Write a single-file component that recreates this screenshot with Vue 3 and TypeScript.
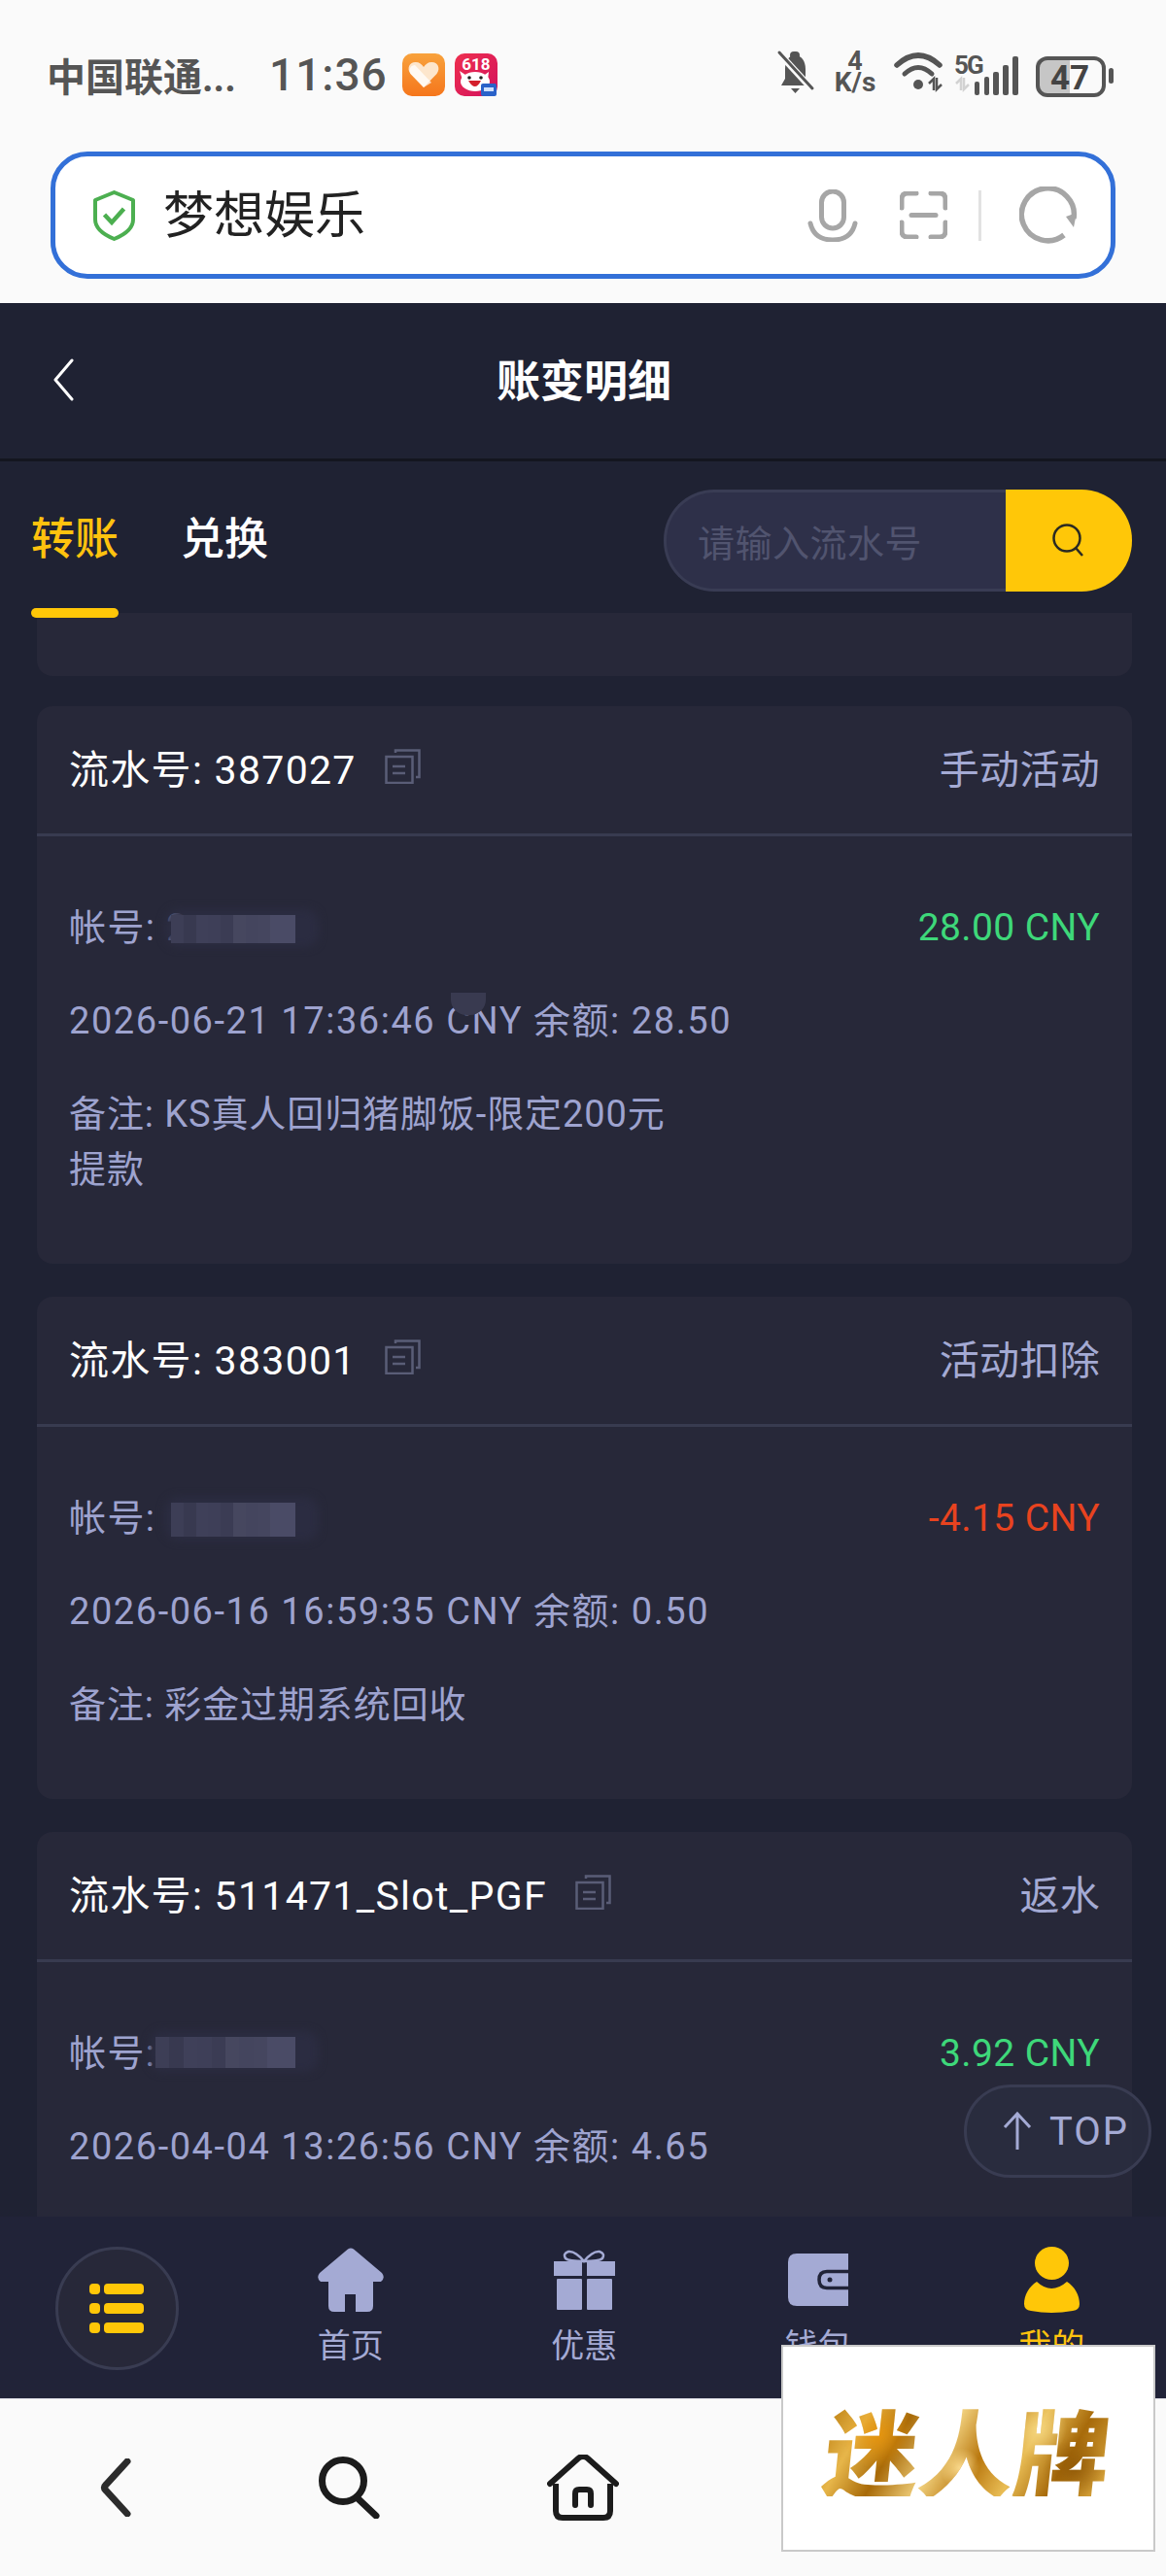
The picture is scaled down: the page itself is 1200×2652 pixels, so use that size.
<script setup lang="ts">
interface Card {
  id: string
  kind: string
  account: string
  amount: string
  tone: string
  time: string
  note: string[]
  mosaic: { left: number; top: number; width: number; height: number }
}
const cards: Card[] = [
  { id: '387027', kind: '手动活动', account: '帐号: 2', amount: '28.00 CNY', tone: 'green', time: '2026-06-21 17:36:46 CNY 余额: 28.50', note: ['备注: KS真人回归猪脚饭-限定200元', '提款'], mosaic: { left: 105, top: 15, width: 128, height: 29 } },
  { id: '383001', kind: '活动扣除', account: '帐号:', amount: '-4.15 CNY', tone: 'red', time: '2026-06-16 16:59:35 CNY 余额: 0.50', note: ['备注: 彩金过期系统回收'], mosaic: { left: 105, top: 12, width: 128, height: 35 } },
  { id: '511471_Slot_PGF', kind: '返水', account: '帐号:', amount: '3.92 CNY', tone: 'green', time: '2026-04-04 13:26:56 CNY 余额: 4.65', note: [], mosaic: { left: 89, top: 11, width: 144, height: 32 } }
]
const shades = ['#3d3e56', '#45465f', '#3b3c54', '#383950', '#4a4b66', '#46475f', '#3f4059', '#4a4b66', '#44455e', '#3e3f58']
const mosaicCells = Array.from({ length: 20 }, (_, i) => shades[(i * 3) % shades.length])
const navItems = [
  { label: '首页', active: false, icon: 'home' },
  { label: '优惠', active: false, icon: 'gift' },
  { label: '钱包', active: false, icon: 'wallet' },
  { label: '我的', active: true, icon: 'user' }
]
</script>

<template>
  <div class="phone">
    <header class="status">
      <div class="status-left">
        <span class="carrier">中国联通...</span>
        <span class="clock">11:36</span>
        <svg class="app-icon" width="44" height="44" viewBox="0 0 44 44">
          <defs>
            <linearGradient id="hg" x1="0" y1="0" x2="0" y2="1">
              <stop offset="0" stop-color="#f8a23c" />
              <stop offset="1" stop-color="#f5761c" />
            </linearGradient>
          </defs>
          <rect width="44" height="44" rx="10" fill="url(#hg)" />
          <path d="M22 35 L8.500 21 C4 15 8 8.500 14 9 C17.500 9 20 11 22 14 C24 11 26.500 9 30 9 C36 8.500 40 15 35.500 21 Z" fill="#fde6cc" />
          <path d="M13 12 L30 30 L22 35 L8.500 21 C6 16 9 12 13 12 Z" fill="#fff" opacity=".75" />
        </svg>
        <svg class="app-icon" width="44" height="44" viewBox="0 0 44 44">
          <defs>
            <linearGradient id="pg" x1="0" y1="0" x2="1" y2="1">
              <stop offset="0" stop-color="#ee2f4e" />
              <stop offset="1" stop-color="#d3125e" />
            </linearGradient>
          </defs>
          <rect width="44" height="44" rx="10" fill="url(#pg)" />
          <text x="22" y="17" text-anchor="middle" class="t618">618</text>
          <ellipse cx="21" cy="29" rx="15" ry="10" fill="#fff" />
          <path d="M5 18 L14 24 L8 27 Z M35 19 L28 24 L34 27 Z" fill="#fff" />
          <path d="M14 28 Q21 40 27 28 Z" fill="#d4202c" />
          <circle cx="15" cy="25" r="1.800" fill="#222" />
          <circle cx="27" cy="25" r="1.800" fill="#222" />
          <rect x="27" y="31" width="16" height="13" rx="2" fill="#2a62c9" />
          <rect x="30" y="35" width="10" height="4" fill="#cfe0ff" />
        </svg>
      </div>
      <svg class="status-right" width="350" height="70" viewBox="0 -10 350 70">
        <path d="M20 6 C27 6 31 12 31 20 V30 L36 37 H6 L10 30 V20 C10 12 14 6 20 6 Z" fill="#555" />
        <rect x="15" y="2" width="10" height="8" rx="4" fill="#555" />
        <path d="M16 40 H25 L20.500 45 Z" fill="#555" />
        <path d="M3 3 L38 41" stroke="#fafafa" stroke-width="7" />
        <path d="M4 3 L38 40" stroke="#555" stroke-width="3" stroke-linecap="round" />
        <text class="t-speed"><tspan x="82" y="21" text-anchor="middle" class="t-speed1">4</tspan><tspan x="82" y="43" text-anchor="middle">K/s</tspan></text>
        <path d="M125 16 Q147 -4 169 16" fill="none" stroke="#555" stroke-width="5.500" stroke-linecap="round" />
        <path d="M133 25 Q147 12 161 25" fill="none" stroke="#555" stroke-width="5" stroke-linecap="round" />
        <circle cx="147" cy="36" r="5" fill="#555" />
        <path d="M158 35 L163 30 V42 M166 29 V41 L171 36" fill="none" stroke="#555" stroke-width="2.500" />
        <text x="184" y="25" class="t-5g">5G</text>
        <path d="M186 35 L191 30 V42 M194 29 V41 L199 36" fill="none" stroke="#d2d2d2" stroke-width="2.500" />
        <rect x="205" y="33" width="5" height="14" rx="2" fill="#555" />
        <rect x="215" y="28" width="5" height="19" rx="2" fill="#555" />
        <rect x="224" y="23" width="6" height="24" rx="2" fill="#555" />
        <rect x="234" y="16" width="6" height="31" rx="2" fill="#555" />
        <rect x="244" y="7" width="6" height="40" rx="2" fill="#555" />
        <path d="M268 17 Q268 9 276 9 H303 V45 H276 Q268 45 268 37 Z" fill="#c6c6c6" />
        <rect x="270" y="9" width="68" height="38" rx="10" fill="none" stroke="#555" stroke-width="4" />
        <text x="303" y="41" text-anchor="middle" class="t-batt">47</text>
        <rect x="343" y="19" width="5" height="16" rx="2.500" fill="#555" />
      </svg>
    </header>

    <section class="url-wrap">
      <div class="url-box">
        <svg width="43" height="52" viewBox="0 0 43 52" class="shield">
          <path d="M21.500 2 L41 10 V30 Q41 42 21.500 50 Q2 42 2 30 V10 Z" fill="none" stroke="#4caf50" stroke-width="4" stroke-linejoin="round" />
          <path d="M11.500 25 L19 33 L31.500 19" fill="none" stroke="#4caf50" stroke-width="4.500" />
        </svg>
        <span class="url-text">梦想娱乐</span>
        <div class="url-tools">
          <svg width="52" height="54" viewBox="0 0 52 54">
            <rect x="14.500" y="2" width="23" height="38" rx="11.500" fill="none" stroke="#a6a6a6" stroke-width="5" />
            <path d="M3 35 Q7 52 26 52 Q45 52 49 35" fill="none" stroke="#a6a6a6" stroke-width="5" stroke-linecap="round" />
          </svg>
          <svg class="scan" width="49" height="49" viewBox="0 0 49 49">
            <path d="M2 17 V8 Q2 2 8 2 H17 M32 2 H41 Q47 2 47 8 V17 M2 32 V41 Q2 47 8 47 H17 M47 32 V41 Q47 47 41 47 H32" fill="none" stroke="#a6a6a6" stroke-width="5" stroke-linecap="round" />
            <path d="M12 24.500 H37" stroke="#a6a6a6" stroke-width="5" stroke-linecap="round" />
          </svg>
          <span class="url-sep"></span>
          <svg width="60" height="60" viewBox="0 0 60 60">
            <path d="M46 50 A27 27 0 1 1 56 33" fill="none" stroke="#a6a6a6" stroke-width="5.500" />
            <path d="M48 31 L59 27 L56 42 Z" fill="#a6a6a6" />
          </svg>
        </div>
      </div>
    </section>

    <main class="page">
      <div class="topbar">
        <svg class="back" width="22" height="44" viewBox="0 0 22 44">
          <path d="M20 2 L3 22 L20 42" fill="none" stroke="#fff" stroke-width="3" stroke-linecap="round" stroke-linejoin="round" />
        </svg>
        <h1 class="title">账变明细</h1>
      </div>

      <div class="tabs">
        <div class="tab active">转账<i class="tab-line"></i></div>
        <div class="tab">兑换</div>
        <div class="search">
          <span class="search-field">请输入流水号</span>
          <span class="search-btn">
            <svg width="34" height="36" viewBox="0 0 34 36">
              <circle cx="16" cy="16" r="13.500" fill="none" stroke="#2b2a22" stroke-width="2.500" />
              <path d="M25 26 L32 34" stroke="#2b2a22" stroke-width="2.500" />
            </svg>
          </span>
        </div>
      </div>

      <div class="list">
        <div class="stub"></div>
        <article v-for="card in cards" :key="card.id" class="card">
          <div class="card-head">
            <span class="serial">流水号: {{ card.id }}</span>
            <svg class="copy" width="37" height="36" viewBox="0 0 37 36">
              <path d="M11 4 V1.500 H35.500 V29 H32" fill="none" stroke="#5a5d77" stroke-width="2.500" />
              <rect x="1.500" y="8" width="27" height="27" fill="none" stroke="#5a5d77" stroke-width="2.500" />
              <path d="M8 18 H21 M8 25 H21" stroke="#5a5d77" stroke-width="2.500" />
            </svg>
            <span class="kind">{{ card.kind }}</span>
          </div>
          <div class="card-body">
            <div class="row">
              <span>{{ card.account }}</span>
              <span class="amount" :class="card.tone">{{ card.amount }}</span>
              <span class="smudge" :style="{ left: card.mosaic.left - 6 + 'px', width: card.mosaic.width + 30 + 'px', top: card.mosaic.top - 6 + 'px', height: card.mosaic.height + 10 + 'px' }"></span>
              <span class="mosaic" :style="{ left: card.mosaic.left + 'px', width: card.mosaic.width + 'px', top: card.mosaic.top + 'px', height: card.mosaic.height + 'px' }">
                <i v-for="(c, i) in mosaicCells" :key="i" :style="{ background: c }"></i>
              </span>
            </div>
            <div class="row time">
              <span>{{ card.time }}</span>
              <span v-if="card.id === '387027'" class="spot"></span>
            </div>
            <div v-if="card.note.length" class="note">
              <div v-for="line in card.note" :key="line" class="note-line">{{ line }}</div>
            </div>
          </div>
        </article>
      </div>

      <nav class="nav">
        <div class="nav-cell">
          <span class="menu">
            <svg width="56" height="51" viewBox="0 0 56 51">
              <g fill="#ffc708">
                <rect width="11" height="11" rx="4" />
                <rect x="15" width="41" height="11" rx="4" />
                <rect y="20" width="11" height="11" rx="4" />
                <rect x="15" y="20" width="41" height="11" rx="4" />
                <rect y="40" width="11" height="11" rx="4" />
                <rect x="15" y="40" width="41" height="11" rx="4" />
              </g>
            </svg>
          </span>
        </div>
        <div v-for="item in navItems" :key="item.label" class="nav-cell" :class="{ on: item.active }">
          <span class="nav-icon">
            <svg v-if="item.icon === 'home'" class="i-home" width="68" height="66" viewBox="0 0 68 66">
              <path d="M31 1.500 Q34 -0.500 37 1.500 L66 26 Q70 31 65 35 H57 V60 Q57 66 51 66 H39 V48 H28 V66 H17 Q11 66 11 60 V35 H3 Q-2 31 2 26 Z" fill="#a4aad4" />
            </svg>
            <svg v-else-if="item.icon === 'gift'" class="i-gift" width="63" height="62" viewBox="0 0 63 62">
              <path d="M31 12 Q22 1 15 2 Q9 4 12 9 Q15 12 31 12 Q47 12 50 9 Q53 4 47 2 Q40 1 31 12 Z" fill="none" stroke="#a4aad4" stroke-width="2.500" />
              <rect y="12" width="29" height="15" fill="#a4aad4" />
              <rect x="34" y="12" width="29" height="15" fill="#a4aad4" />
              <rect x="3" y="30" width="26" height="32" rx="1" fill="#a4aad4" />
              <rect x="34" y="30" width="26" height="32" rx="1" fill="#a4aad4" />
            </svg>
            <svg v-else-if="item.icon === 'wallet'" class="i-wallet" width="62" height="54" viewBox="0 0 62 54">
              <path d="M9 0 H62 V54 H9 Q0 54 0 45 V9 Q0 0 9 0 Z" fill="#a4aad4" />
              <path d="M62 18.500 H40 Q32 18.500 32 27 Q32 35.500 40 35.500 H62" fill="none" stroke="#212338" stroke-width="3.500" />
              <circle cx="43" cy="27" r="2.500" fill="#212338" />
            </svg>
            <svg v-else width="57" height="68" viewBox="0 0 57 68">
              <ellipse cx="28.500" cy="17" rx="17.500" ry="17" fill="#ffc708" />
              <path d="M13 36 Q28 50 44 36 C52 41 57 50 57 59 Q57 65 50 66 Q28 70 7 66 Q0 65 0 59 C0 50 5 41 13 36 Z" fill="#ffc708" />
            </svg>
          </span>
          <span class="nav-label">{{ item.label }}</span>
        </div>
      </nav>
    </main>

    <footer class="browser">
      <svg width="32" height="60" viewBox="0 0 32 60">
        <path d="M28 3 L6 27 Q3 30 6 33 L28 57" fill="none" stroke="#2c2c2c" stroke-width="7" stroke-linecap="round" />
      </svg>
      <svg class="b-search" width="64" height="64" viewBox="0 0 64 64">
        <circle cx="25" cy="25" r="21.500" fill="none" stroke="#1c1c1c" stroke-width="7" />
        <path d="M39 42 L59 61" stroke="#1c1c1c" stroke-width="7" stroke-linecap="round" />
      </svg>
      <svg class="b-home" width="74" height="68" viewBox="0 0 74 68">
        <path d="M3 30 L32 4 Q37 0 42 4 L71 30" fill="none" stroke="#1c1c1c" stroke-width="6" stroke-linecap="round" />
        <path d="M9 30 V58 Q9 65 16 65 H58 Q65 65 65 58 V30" fill="none" stroke="#1c1c1c" stroke-width="6" />
        <path d="M29 52 V40 Q29 36 33 36 H41 Q45 36 45 40 V52" fill="none" stroke="#1c1c1c" stroke-width="6" stroke-linecap="round" />
      </svg>
    </footer>

    <div class="to-top">
      <svg width="30" height="40" viewBox="0 0 30 40">
        <path d="M15 39 V2 M2 16 L15 2 L28 16" fill="none" stroke="#a4aad4" stroke-width="3" />
      </svg>
      <span>TOP</span>
    </div>

    <div class="logo"><span class="logo-text">迷人牌</span></div>
  </div>
</template>

<style>
html, body { margin: 0; background: #fafafa; }
</style>

<style scoped>
.phone {
  position: relative;
  width: 1200px;
  height: 2652px;
  overflow: hidden;
  display: flex;
  flex-direction: column;
  background: #fafafa;
  font-family: Roboto, "Noto Sans CJK SC", sans-serif;
}
.status {
  height: 156px;
  flex: none;
  display: flex;
  align-items: center;
  justify-content: space-between;
  box-sizing: border-box;
  padding: 0 52px 0 48px;
}
.status-left { display: flex; align-items: center; margin-top: -2px; }
.carrier { font-size: 40px; font-weight: 700; color: #555; width: 229px; white-space: nowrap; }
.clock { font-size: 46px; font-weight: 500; color: #555; width: 137px; letter-spacing: 1px; }
.app-icon { margin-right: 10px; }
.status-right { margin-top: -4px; }
.t618 { font: 700 17px Roboto, sans-serif; fill: #fff; }
.t-speed { font: 700 28px Roboto, sans-serif; fill: #555; }
.t-speed1 { font-size: 27px; }
.t-5g { font: 700 26px Roboto, sans-serif; fill: #555; letter-spacing: -2px; }
.t-batt { font: 700 35px Roboto, sans-serif; fill: #444; }

.url-wrap { height: 156px; flex: none; box-sizing: border-box; padding: 0 52px 25px 52px; }
.url-box {
  height: 131px;
  box-sizing: border-box;
  border: 5px solid #3370d8;
  border-radius: 38px;
  background: #fff;
  display: flex;
  align-items: center;
  padding-left: 39px;
}
.url-text { margin: 2px 0 0 29px; font-size: 52px; color: #222; line-height: 1; }
.url-tools { margin-left: auto; margin-right: 34px; display: flex; align-items: center; }
.scan { margin-left: 43px; }
.url-sep { width: 3px; height: 52px; background: #e2e2e2; margin: 0 39px 0 32px; }

.page { flex: 1; min-height: 0; display: flex; flex-direction: column; background: #1f2233; }
.topbar {
  height: 163px;
  flex: none;
  box-sizing: border-box;
  border-bottom: 3px solid #14161f;
  padding-top: 2px;
  display: flex;
  align-items: center;
  justify-content: center;
  position: relative;
}
.back { position: absolute; left: 54px; top: 57px; }
.title { margin: 0 0 0 2px; font-size: 45px; font-weight: 700; color: #fff; line-height: 1; }

.tabs {
  height: 156px;
  flex: none;
  box-sizing: border-box;
  padding: 4px 35px 0 32px;
  display: flex;
  align-items: center;
  gap: 64px;
  position: relative;
  z-index: 1;
}
.tab { font-size: 45px; font-weight: 500; color: #fff; position: relative; line-height: 1; }
.tab.active { color: #ffc20e; }
.tab-line {
  position: absolute;
  left: 0;
  right: 0;
  top: 93px;
  height: 10px;
  border-radius: 5px;
  background: #ffc708;
}
.search {
  margin-left: auto;
  margin-top: 2px;
  width: 482px;
  height: 105px;
  display: flex;
}
.search-field {
  flex: 1;
  box-sizing: border-box;
  border: 3px solid #393c54;
  border-right: 0;
  background: #2e3049;
  border-radius: 52px 0 0 52px;
  color: #51546f;
  font-size: 38px;
  letter-spacing: .5px;
  display: flex;
  align-items: center;
  padding-left: 32px;
}
.search-btn {
  width: 130px;
  background: #ffc708;
  border-radius: 0 52px 52px 0;
  display: flex;
  align-items: center;
  justify-content: center;
  padding-right: 2px;
  box-sizing: border-box;
}

.list {
  flex: 1;
  min-height: 0;
  overflow: hidden;
  padding: 0 35px 0 38px;
}
.stub { height: 65px; margin-bottom: 31px; background: #272839; border-radius: 0 0 16px 16px; }
.card { background: #272839; border-radius: 16px; margin-bottom: 34px; }
.card-head {
  height: 134px;
  box-sizing: border-box;
  border-bottom: 3px solid #383b50;
  padding: 0 33px 8px 33px;
  display: flex;
  align-items: center;
  color: #fff;
  font-size: 41px;
}
.serial { white-space: nowrap; letter-spacing: 1.3px; }
.copy { margin-left: 29px; }
.kind { margin-left: auto; color: #a4aad4; letter-spacing: .3px; }
.card-body { padding: 66px 33px 68px 33px; color: #9ea3cf; font-size: 38px; letter-spacing: 1.4px; }
.row {
  position: relative;
  height: 57px;
  line-height: 57px;
  margin-bottom: 39px;
  display: flex;
  justify-content: space-between;
  white-space: nowrap;
}
.row.time { letter-spacing: 1.55px; }
.card-body > .row:last-child { margin-bottom: 0; }
.note-line { height: 57px; line-height: 57px; letter-spacing: .9px; }
.amount { font-size: 39px; letter-spacing: .4px; }
.amount.green { color: #3ed87a; }
.amount.red { color: #e8431f; }
.mosaic {
  position: absolute;
  display: grid;
  grid-template-columns: repeat(10, 1fr);
  grid-template-rows: 1fr 1fr;
}
.smudge {
  position: absolute;
  background: #2b2c41;
  border-radius: 14px;
  filter: blur(4px);
}
.spot {
  position: absolute;
  left: 393px;
  top: -1px;
  width: 36px;
  height: 23px;
  background: #393a50;
  border-radius: 0 0 16px 16px;
}

.nav {
  height: 187px;
  flex: none;
  background: #212338;
  display: grid;
  grid-template-columns: repeat(5, 240.500px);
  position: relative;
}
.nav-cell { position: relative; display: flex; flex-direction: column; align-items: center; color: #a4aad4; }
.nav-cell.on { color: #ffc20e; }
.menu {
  margin-top: 31px;
  width: 127px;
  height: 127px;
  box-sizing: border-box;
  border: 3px solid #393c52;
  border-radius: 50%;
  background: #272839;
  display: flex;
  align-items: center;
  justify-content: center;
}
.nav-icon { height: 84px; margin-top: 31px; display: flex; align-items: flex-start; }
.i-home { margin-top: 1px; }
.i-gift { margin-top: 3px; }
.i-wallet { margin-top: 7px; }
.nav-label { font-size: 34px; line-height: 1; margin-top: 1px; }

.browser {
  height: 183px;
  flex: none;
  box-sizing: border-box;
  border-top: 1px solid #d9d9e2;
  background: #fafafa;
  display: flex;
  align-items: center;
  padding: 0 0 0 103px;
}
.b-search { margin-left: 193px; }
.b-home { margin-left: 171px; }

.to-top {
  position: absolute;
  left: 992px;
  top: 2146px;
  width: 193px;
  height: 96px;
  box-sizing: border-box;
  border: 3px solid #393c52;
  border-radius: 48px;
  background: rgba(42, 45, 64, .85);
  display: flex;
  align-items: center;
  padding-left: 37px;
  gap: 18px;
  color: #a4aad4;
  font-size: 40px;
  letter-spacing: 2px;
}
.logo {
  position: absolute;
  left: 804px;
  top: 2414px;
  width: 385px;
  height: 213px;
  box-sizing: border-box;
  border: 2px solid #c9c9c9;
  background: #fff;
  display: flex;
  align-items: center;
  justify-content: center;
}
.logo-text {
  font-family: "Noto Sans CJK SC", sans-serif;
  font-size: 98px;
  font-weight: 900;
  line-height: 1;
  white-space: nowrap;
  transform: skewX(-6deg);
  background:
    radial-gradient(circle at 18% 35%, rgba(235, 150, 10, .85) 0, rgba(235, 150, 10, 0) 14%),
    radial-gradient(circle at 48% 70%, rgba(255, 225, 150, .9) 0, rgba(255, 225, 150, 0) 12%),
    radial-gradient(circle at 74% 30%, rgba(245, 215, 130, .9) 0, rgba(245, 215, 130, 0) 13%),
    radial-gradient(circle at 88% 70%, rgba(140, 85, 5, .8) 0, rgba(140, 85, 5, 0) 12%),
    linear-gradient(115deg, #b97a0c 0%, #e7b64a 14%, #a86a08 27%, #f0cf7c 42%, #b9780f 55%, #e9bd55 68%, #a76a0a 82%, #dfae45 100%);
  -webkit-background-clip: text;
  background-clip: text;
  color: transparent;
}
</style>
